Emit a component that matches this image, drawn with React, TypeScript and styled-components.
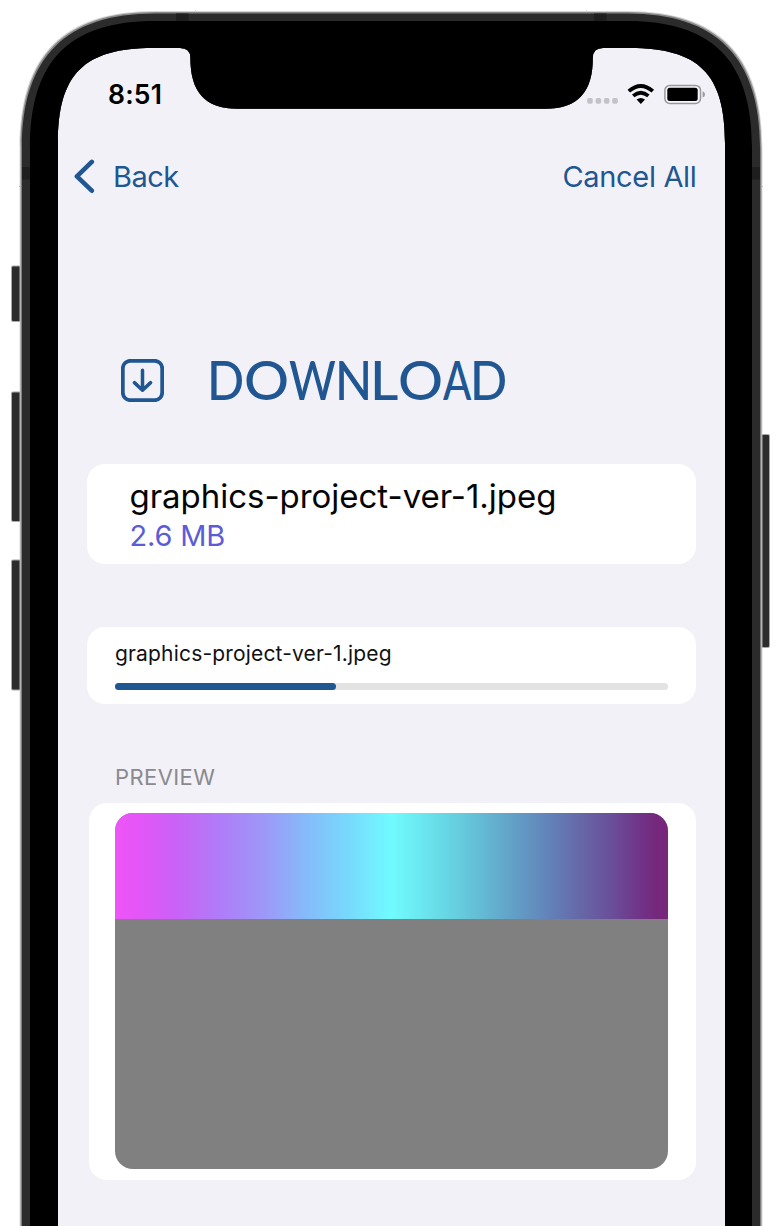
import React from 'react';
import styled, { createGlobalStyle } from 'styled-components';

const accent = '#205691';

const GlobalStyle = createGlobalStyle`
  body {
    margin: 0;
    background: #fff;
    font-family: Inter, 'Liberation Sans', sans-serif;
  }
`;

const Phone = styled.div`
  position: relative;
  box-sizing: border-box;
  width: 782px;
  height: 1226px;
  padding: 48px 57px 0 58px;
  overflow: hidden;
`;

const Bezel = styled.svg`
  position: absolute;
  inset: 0;
  pointer-events: none;
`;

const Screen = styled.main`
  display: flex;
  flex-direction: column;
  height: 1178px;
  background: #f2f1f7;
`;

const StatusBar = styled.div`
  display: flex;
  align-items: center;
  justify-content: space-between;
  height: 91px;
  margin-bottom: 2px;
  padding: 0 19px 0 50px;
`;

const Clock = styled.time`
  font-size: 26.5px;
  font-weight: 600;
  letter-spacing: 0.2px;
  color: #000;
`;

const NavBar = styled.nav`
  display: flex;
  align-items: center;
  justify-content: space-between;
  height: 71px;
  padding: 0 28.5px 0 15px;
`;

const NavButton = styled.button<{ $spacing: number }>`
  display: flex;
  align-items: center;
  gap: 16px;
  padding: 0;
  border: 0;
  background: none;
  font: 400 29px/40px Inter, sans-serif;
  letter-spacing: ${(p) => p.$spacing}px;
  color: ${accent};
`;

const Heading = styled.header`
  display: flex;
  align-items: center;
  gap: 43px;
  height: 81px;
  margin-top: 128px;
  padding-left: 63px;
  color: ${accent};
`;

const Title = styled.h1`
  display: flex;
  margin: 0 0 2px;
  font: 500 54px/79px Lato, sans-serif;
`;

const Letter = styled.span<{ $advance: number; $stretch: number }>`
  width: ${(p) => p.$advance}px;
  transform: scaleX(${(p) => p.$stretch});
  transform-origin: left center;
`;

const Card = styled.section<{ $height: number; $top: number; $inset?: number }>`
  box-sizing: border-box;
  height: ${(p) => p.$height}px;
  margin: ${(p) => p.$top}px 29px 0 ${(p) => p.$inset ?? 29}px;
  border-radius: 18px;
  background: #fff;
`;

const FileCard = styled(Card)`
  padding: 12px 42.5px;
`;

const FileName = styled.div`
  font-size: 33px;
  line-height: 40px;
  letter-spacing: -0.03px;
  color: #050505;
`;

const FileSize = styled.div`
  font-size: 29px;
  line-height: 40px;
  letter-spacing: -0.2px;
  color: #5c5cd6;
`;

const ProgressCard = styled(Card)`
  padding: 13px 28px;
`;

const ProgressName = styled.div`
  font-size: 21px;
  line-height: 28px;
  letter-spacing: 0.17px;
  color: #111;
`;

const Track = styled.div`
  height: 7px;
  margin-top: 15.5px;
  border-radius: 4px;
  background: #e3e3e3;
`;

const Fill = styled.div`
  width: 220.5px;
  height: 100%;
  border-radius: 4px;
  background: ${accent};
`;

const SectionLabel = styled.h2`
  margin: 57.5px 0 0 57px;
  font-size: 22px;
  font-weight: 400;
  line-height: 30px;
  letter-spacing: 0.4px;
  color: #8a8a8e;
`;

const PreviewCard = styled(Card)`
  padding: 10.5px 28px 10.5px 26px;
`;

const Preview = styled.div`
  height: 356px;
  border-radius: 18px;
  overflow: hidden;
  background: #808080;
`;

const LoadedPart = styled.div`
  height: 105.5px;
  background: linear-gradient(
    90deg,
    #ee55f9 0%,
    #e555f7 4%,
    #ca62f7 11%,
    #b279f8 18%,
    #9d98f8 27%,
    #84bdfa 35%,
    #78d8fc 42%,
    #70fbff 50%,
    #66d2e1 61%,
    #62a5c9 71%,
    #6380b8 79%,
    #6668a8 84%,
    #69509a 89.5%,
    #703388 95%,
    #75287b 98%,
    #78277b 100%
  );
`;

const letters: [string, number, number][] = [
  ['D', 37.2, 0.905],
  ['O', 45.1, 1.04],
  ['W', 45.7, 0.834],
  ['N', 35.2, 0.9],
  ['L', 27.7, 1.02],
  ['O', 45.4, 1.04],
  ['A', 26.7, 0.77],
  ['D', 40, 0.905],
];

const StatusIcons = () => (
  <svg width="120" height="24" viewBox="586 82 120 24">
    {[587.2, 595.6, 603.9, 612.2].map((x) => (
      <rect key={x} x={x} y="98" width="5.6" height="5.8" rx="1.8" fill="#c3c2c7" />
    ))}
    <g fill="none" stroke="#000" strokeWidth="3.8">
      <path d="M628.8 91.2 Q640.8 80.6 652.8 91.2" />
      <path d="M633.2 95.9 Q640.8 89.6 648.4 95.9" />
    </g>
    <path d="M636.6 99.5 Q640.8 96.3 645 99.5 L640.8 103.9 Z" />
    <rect x="664.9" y="85.4" width="35.6" height="18" rx="5" fill="#f8f7fb" stroke="#99989d" strokeWidth="1.5" />
    <rect x="667.3" y="87.7" width="30.4" height="13.3" rx="2.5" />
    <path d="M702.6 91.2 Q705 92 705 94.4 Q705 96.8 702.6 97.4 Z" fill="#99989d" />
  </svg>
);

const ChevronLeft = () => (
  <svg width="24" height="36" viewBox="74 158.9 24 36">
    <path
      d="M92.8 161.8 L77.9 176.3 L92.8 190.6"
      fill="none"
      stroke={accent}
      strokeWidth="4.6"
      strokeLinecap="round"
      strokeLinejoin="round"
    />
  </svg>
);

const DownloadIcon = () => (
  <svg width="43" height="43" viewBox="0 0 43 43" fill="none" stroke={accent} strokeLinecap="round" strokeLinejoin="round">
    <rect x="1.8" y="1.8" width="39.4" height="39.4" rx="7.6" strokeWidth="3.8" />
    <path d="M21.5 11.2 V30.8 M13.4 23.6 L21.5 31.2 L29.6 23.6" strokeWidth="3.5" />
  </svg>
);

const outer = (o: number) =>
  `M${21 - o} 1230 V148 C${21 - o} ${56 - o},${65 - o} ${12.5 - o},155 ${12.5 - o} H627 C${717 + o} ${12.5 - o},${761 + o} ${56 - o},${761 + o} 148 V1230 Z`;

const screenHole =
  'M58 1230 V143 C58 74,84 48,153 48 H180 Q190.4 48 190.4 58 C190.4 91,204 108.8,238 108.8 H545 C579 108.8,592.8 91,592.8 58 Q592.8 48 603 48 H630 C699 48,725 74,725 143 V1230 Z';

const sideButtons = [
  { x: 12, y: 266.5, h: 54.5 },
  { x: 12, y: 392.5, h: 128.5 },
  { x: 12, y: 560.5, h: 129 },
  { x: 760, y: 435, h: 212 },
];

const PhoneBezel = () => (
  <Bezel width="782" height="1226" viewBox="0 0 782 1226">
    {sideButtons.map((b) => (
      <rect key={b.y} x={b.x} y={b.y} width="9" height={b.h} rx="1" fill="#2c2c2c" stroke="#a8a8a8" strokeWidth="2" paintOrder="stroke" />
    ))}
    <path fill="#aaa" d="M19 186 h3 v1 h-3 Z M760 186 h3 v1 h-3 Z M195 10.5 h1 v2 h-1 Z M586 10.5 h1 v2 h-1 Z" />
    <path fillRule="evenodd" fill="#d2d2d2" d={`${outer(1.4)} ${screenHole}`} />
    <path fillRule="evenodd" fill="#888" d={`${outer(0.4)} ${screenHole}`} />
    <path fillRule="evenodd" fill="#2b2b2b" d={`${outer(-0.9)} ${screenHole}`} />
    <path fill="#1e1e1e" d="M176 13.5 h12.5 v8 h-12.5 Z M594 13.5 h12.5 v8 h-12.5 Z M22 167 h8.5 v12.5 h-8.5 Z M752 167 h8 v12.5 h-8 Z" />
    <path
      fillRule="evenodd"
      d={`M30 1230 V148 C30 60,70 21,155 21 H627 C712 21,752 60,752 148 V1230 Z ${screenHole}`}
    />
  </Bezel>
);

export default function App() {
  return (
    <>
      <GlobalStyle />
      <Phone>
        <Screen>
          <StatusBar>
            <Clock>8:51</Clock>
            <StatusIcons />
          </StatusBar>
          <NavBar>
            <NavButton $spacing={-0.5}>
              <ChevronLeft />
              Back
            </NavButton>
            <NavButton $spacing={-0.33}>Cancel All</NavButton>
          </NavBar>
          <Heading>
            <DownloadIcon />
            <Title>
              {letters.map(([char, advance, stretch], i) => (
                <Letter key={i} $advance={advance} $stretch={stretch}>
                  {char}
                </Letter>
              ))}
            </Title>
          </Heading>
          <FileCard $height={100} $top={43}>
            <FileName>graphics-project-ver-1.jpeg</FileName>
            <FileSize>2.6 MB</FileSize>
          </FileCard>
          <ProgressCard $height={77.5} $top={62.7}>
            <ProgressName>graphics-project-ver-1.jpeg</ProgressName>
            <Track>
              <Fill />
            </Track>
          </ProgressCard>
          <SectionLabel>PREVIEW</SectionLabel>
          <PreviewCard $height={377} $top={11} $inset={31}>
            <Preview>
              <LoadedPart />
            </Preview>
          </PreviewCard>
        </Screen>
        <PhoneBezel />
      </Phone>
    </>
  );
}
